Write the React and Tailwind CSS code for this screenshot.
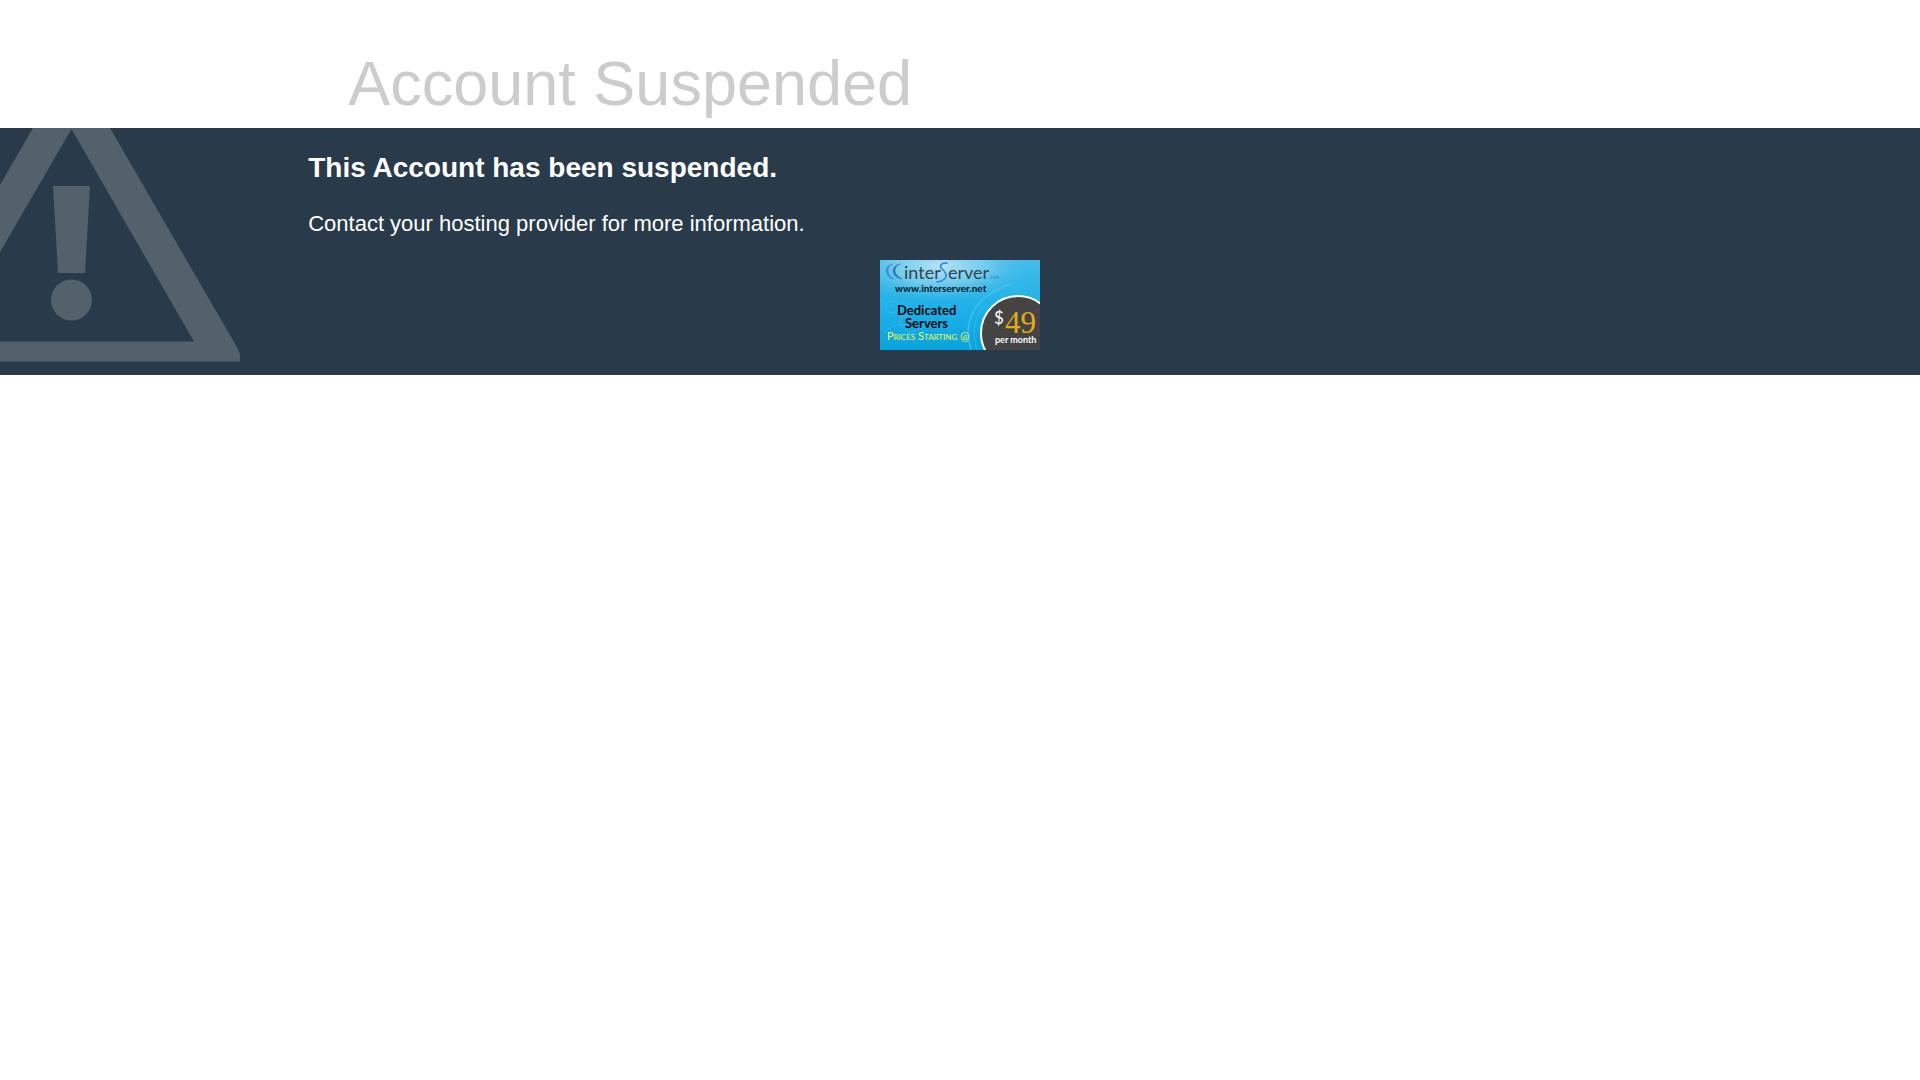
const WarningSign = () => (
  <svg
    className="absolute top-0 left-0"
    width="240"
    height="247"
    viewBox="0 0 240 247"
    fill="#53616d"
    aria-hidden="true"
  >
    <path
      fillRule="evenodd"
      d="M33 0H110L238 221Q240 225 240 228V233.500H0V213.500H194L71.500 1L0 124V57Z"
    />
    <path d="M53 58H90L85 145H58Z" />
    <circle cx="71.500" cy="172" r="20.500" />
  </svg>
);

const ServerBanner = () => (
  <svg
    className="block"
    width="160"
    height="90"
    viewBox="0 0 160 90"
    role="img"
    aria-label="InterServer dedicated servers"
  >
    <defs>
      <linearGradient id="sky" x1="0" y1="0" x2="0" y2="1">
        <stop offset="0" stopColor="#45bce9" />
        <stop offset="0.5" stopColor="#20b2e8" />
        <stop offset="1" stopColor="#08a3df" />
      </linearGradient>
      <radialGradient id="glow" cx="0.4" cy="0.1" r="0.6">
        <stop offset="0" stopColor="#b5e3f6" />
        <stop offset="0.5" stopColor="#8ad5f1" stopOpacity="0.7" />
        <stop offset="1" stopColor="#45bce9" stopOpacity="0" />
      </radialGradient>
    </defs>
    <rect width="160" height="90" fill="url(#sky)" />
    <rect width="150" height="60" fill="url(#glow)" />
    <g fill="none" stroke="#5fc9ef" strokeOpacity="0.45">
      <path d="M91 90Q82 60 102 40Q118 27 132 24" strokeWidth="2" />
      <path d="M97 90Q88 63 106 44" />
      <circle cx="12" cy="47" r="6" />
      <circle cx="25" cy="61" r="5" />
      <path d="M4 72l14 -8l12 9l14 -6" />
    </g>
    <g fill="none" strokeLinecap="round">
      <path d="M13 4Q5 6 6 12Q8 18 14 19Q8 15 8 11Q8 6 13 4Z" fill="#3d8fcf" stroke="#3d8fcf" strokeWidth="0.600" />
      <path d="M20 4Q12 6 13 12Q15 18 22 19Q15 15 15 11Q15 6 20 4Z" fill="#3476bd" stroke="#3476bd" strokeWidth="0.600" />
      <path d="M67 3Q59 3 61 8Q67 13 66 17Q64 21 57 22" stroke="#2a83d0" strokeWidth="1.600" />
    </g>
    <g fontFamily="Lato, sans-serif">
      <text x="24" y="19" fontSize="18" fill="#34424c">inter</text>
      <text x="68" y="19" fontSize="18" fill="#34424c">erver</text>
      <text x="109" y="19" fontSize="6" fill="#3e8cc8">.net</text>
      <text x="15" y="32" fontSize="10" fontWeight="700" fill="#071018">www.interserver.net</text>
      <text x="17" y="55" fontSize="13" fontWeight="700" fill="#05090c">Dedicated</text>
      <text x="25" y="68" fontSize="13" fontWeight="700" fill="#05090c">Servers</text>
      <text x="7" y="80" fontSize="11" fill="#eef74a">
        P<tspan fontSize="8">RICES</tspan> S<tspan fontSize="8">TARTING</tspan> @
      </text>
    </g>
    <circle cx="138" cy="73" r="37" fill="#444444" stroke="#ffffff" strokeWidth="2" />
    <text x="114" y="64" fontSize="17" fill="#ffffff" fontFamily="Lato, sans-serif">$</text>
    <text x="125" y="73" fontSize="31" fill="#e6ab16" fontFamily="'Liberation Serif', serif">49</text>
    <text x="115" y="83" fontSize="9" fontWeight="700" fill="#ffffff" fontFamily="Lato, sans-serif">per month</text>
  </svg>
);

export default function App() {
  return (
    <div className="bg-white font-['Liberation_Sans',Arial,sans-serif]">
      <header className="px-[calc(16%+1px)] pt-[43px] pb-[5px]">
        <h1 className="pl-10 text-[63px] leading-[80px] text-[#cccccc]">Account Suspended</h1>
      </header>

      <main className="relative bg-[#293a4a] pt-6 pb-[25px] text-white">
        <WarningSign />
        <div className="relative px-[calc(16%+1px)]">
          <h2 className="text-[28px] leading-8 font-bold">This Account has been suspended.</h2>
          <p className="mt-[26px] text-[22px] leading-7">
            Contact your hosting provider for more information.
          </p>
        </div>
        <div className="relative mt-[22px] flex justify-center">
          <a href="#interserver">
            <ServerBanner />
          </a>
        </div>
      </main>
    </div>
  );
}
